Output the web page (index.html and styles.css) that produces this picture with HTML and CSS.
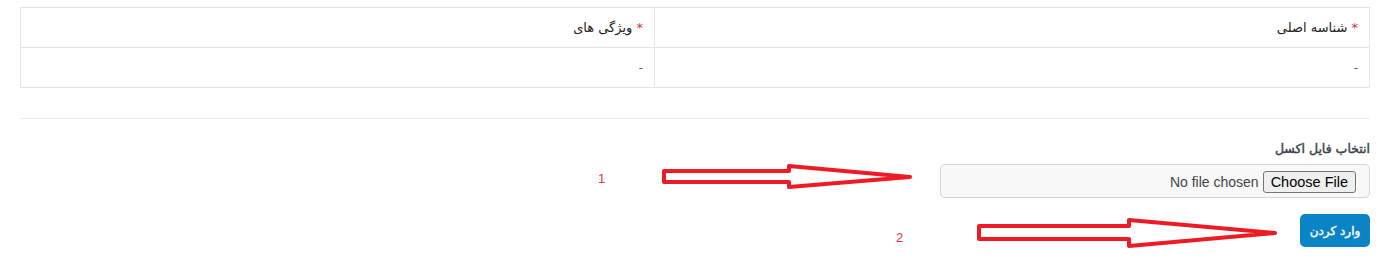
FILE: index.html
```html
<!doctype html>
<html lang="fa" dir="rtl">

<head>
	<meta charset="UTF-8">
	<meta name="viewport" content="width=device-width, initial-scale=1.0">
	<title>وارد کردن ویژگی ها</title>
	<link rel="stylesheet" href="styles.css">
</head>

<body>
	<div class="wrap">

		<!-- جدول ستون ها -->
		<table class="attrs">
			<colgroup>
				<col class="col-main">
				<col>
			</colgroup>
			<thead>
				<tr>
					<th><span class="req">*</span> شناسه اصلی</th>
					<th><span class="req">*</span> ویژگی های</th>
				</tr>
			</thead>
			<tbody>
				<tr>
					<td>-</td>
					<td>-</td>
				</tr>
			</tbody>
		</table>

		<hr class="sep">

		<!-- فرم آپلود -->
		<form class="import">
			<label class="field-label" for="excel">انتخاب فایل اکسل</label>
			<input type="file" id="excel" class="file-input">
			<div class="actions">
				<button type="button" class="btn-primary">وارد کردن</button>
			</div>
		</form>

		<!-- راهنما -->
		<svg class="marks" width="1391" height="271" viewBox="0 0 1391 271">
			<g fill="none" stroke="#ed1c24" stroke-width="4" stroke-linejoin="round">
				<polygon points="664,171 789,171 789,166 910,177 789,187 789,182 664,182" />
				<polygon points="979,226 1129,226 1129,220 1275,233 1129,246 1129,239 979,239" />
			</g>
			<text x="598" y="183" class="mark-num">1</text>
			<text x="896" y="242" class="mark-num">2</text>
		</svg>
	</div>
</body>

</html>
```

FILE: styles.css
```css
body {
	margin: 0;
	padding: 0;
	background: #fff;
	font-family: "DejaVu Sans", "Noto Sans", sans-serif;
	font-size: 13px;
	color: #222;
}

.wrap {
	position: relative;
	padding: 7px 21px 0 20px;
	height: 264px;
}

.attrs {
	width: 100%;
	border-collapse: collapse;
	table-layout: fixed;
}

.col-main {
	width: 715px;
}

.attrs th,
.attrs td {
	height: 39px;
	padding: 0 11px;
	border: 1px solid #e4e4e4;
	text-align: right;
	font-weight: normal;
}

.attrs td {
	color: #50575e;
	font-size: 12px;
}

.req {
	color: #e02c4c;
}

.sep {
	margin: 30px 0 0 0;
	border: 0;
	border-top: 1px solid #ececec;
}

.import {
	display: flex;
	flex-direction: column;
	align-items: flex-start;
	padding-top: 21px;
}

/* فونت bold عربی ندارد، برای همین با stroke پررنگ می شود */
.field-label {
	align-self: stretch;
	text-align: right;
	color: #3c434a;
	font-size: 12.5px;
	line-height: 18px;
	-webkit-text-stroke: 0.45px #3c434a;
}

.file-input {
	box-sizing: border-box;
	width: 430px;
	height: 34px;
	margin-top: 6px;
	padding: 6px 13px 0 11px;
	border: 1px solid #d5d5d5;
	border-radius: 5px;
	background: #f8f8f8;
	color: #444;
	font-family: "Liberation Sans", Arial, sans-serif;
	font-size: 14px;
}

.file-input::file-selector-button {
	height: 22px;
	margin: 0 0 0 4px;
	padding: 0 7px;
	border: 1px solid #767676;
	border-radius: 3px;
	background: #efefef;
	color: #000;
	font-family: "Liberation Sans", Arial, sans-serif;
	font-size: 14.5px;
}

.actions {
	margin-top: 16px;
}

.btn-primary {
	box-sizing: border-box;
	width: 70px;
	height: 33px;
	padding: 0;
	border: 0;
	border-radius: 5px;
	background: #0a84c6;
	color: #fff;
	white-space: nowrap;
	font-family: "DejaVu Sans", sans-serif;
	font-size: 12px;
	-webkit-text-stroke: 0.4px #fff;
}

.marks {
	position: absolute;
	top: 0;
	left: 0;
	direction: ltr;
	pointer-events: none;
}

.mark-num {
	fill: #e8304a;
	font-family: "Liberation Sans", sans-serif;
	font-size: 13px;
}
```
